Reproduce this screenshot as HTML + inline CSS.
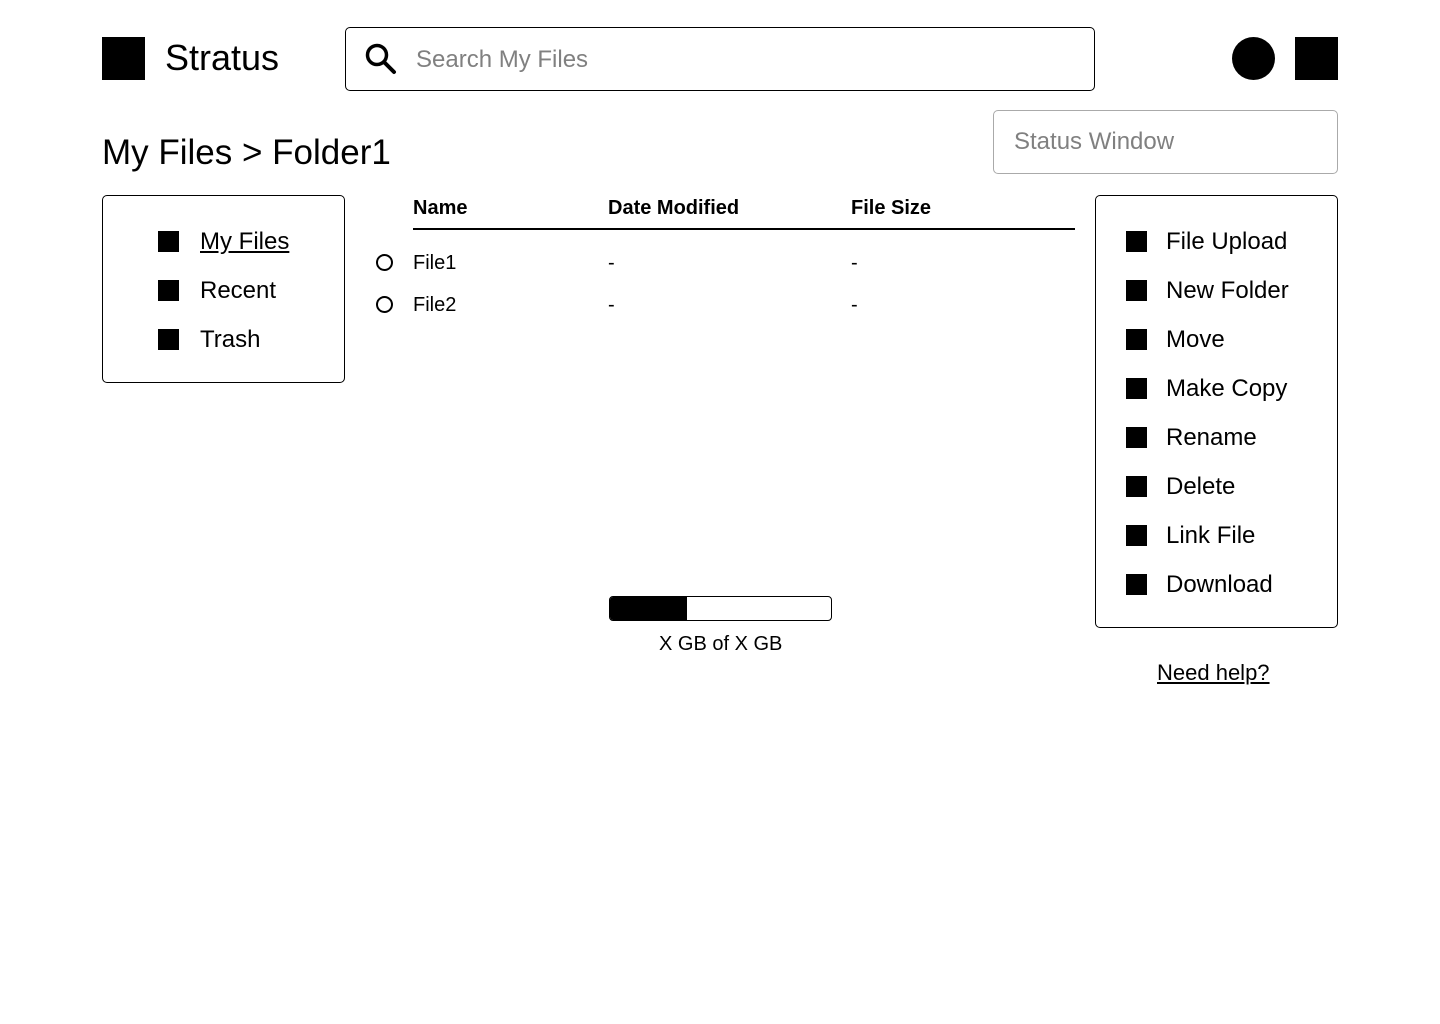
<!DOCTYPE html>
<html><head><meta charset="utf-8"><style>
*{margin:0;padding:0;box-sizing:border-box}
body{width:1440px;height:1024px;background:#fff;font-family:"Liberation Sans",sans-serif;color:#000;position:relative;overflow:hidden}
.a{position:absolute}
.sq{position:absolute;background:#000}
.box{position:absolute;border:1px solid #000;border-radius:5px}
.t{position:absolute;white-space:nowrap;line-height:1}
</style></head><body>
<div class="sq" style="left:102px;top:37px;width:43px;height:43px"></div>
<div class="t" style="left:165px;top:40px;font-size:36px">Stratus</div>
<div class="box" style="left:345px;top:27px;width:750px;height:64px"></div>
<svg class="a" style="left:364px;top:42px" width="34" height="34" viewBox="0 0 34 34"><circle cx="13" cy="13" r="9.5" fill="none" stroke="#000" stroke-width="3.5"/><line x1="20" y1="20" x2="30" y2="30" stroke="#000" stroke-width="4" stroke-linecap="round"/></svg>
<div class="t" style="left:416px;top:48px;font-size:24px;color:#808080">Search My Files</div>
<div class="a" style="left:1232px;top:37px;width:43px;height:43px;border-radius:50%;background:#000"></div>
<div class="sq" style="left:1295px;top:37px;width:43px;height:43px"></div>

<div class="t" style="left:102px;top:135px;font-size:35px">My Files &gt; Folder1</div>
<div class="box" style="left:993px;top:110px;width:345px;height:64px;border-color:#aaa"></div>
<div class="t" style="left:1014px;top:130px;font-size:24px;color:#808080">Status Window</div>

<div class="box" style="left:102px;top:195px;width:243px;height:188px"></div>
<div class="sq" style="left:158px;top:231px;width:21px;height:21px"></div>
<div class="t" style="left:200px;top:230px;font-size:24px;text-decoration:underline">My Files</div>
<div class="sq" style="left:158px;top:280px;width:21px;height:21px"></div>
<div class="t" style="left:200px;top:279px;font-size:24px">Recent</div>
<div class="sq" style="left:158px;top:329px;width:21px;height:21px"></div>
<div class="t" style="left:200px;top:328px;font-size:24px">Trash</div>

<div class="t" style="left:413px;top:198px;font-size:20px;font-weight:bold">Name</div>
<div class="t" style="left:608px;top:198px;font-size:20px;font-weight:bold">Date Modified</div>
<div class="t" style="left:851px;top:198px;font-size:20px;font-weight:bold">File Size</div>
<div class="a" style="left:413px;top:228px;width:662px;height:2px;background:#000"></div>
<div class="a" style="left:376px;top:254px;width:17px;height:17px;border:2px solid #000;border-radius:50%"></div>
<div class="t" style="left:413px;top:253px;font-size:20px">File1</div>
<div class="t" style="left:608px;top:253px;font-size:20px">-</div>
<div class="t" style="left:851px;top:253px;font-size:20px">-</div>
<div class="a" style="left:376px;top:296px;width:17px;height:17px;border:2px solid #000;border-radius:50%"></div>
<div class="t" style="left:413px;top:295px;font-size:20px">File2</div>
<div class="t" style="left:608px;top:295px;font-size:20px">-</div>
<div class="t" style="left:851px;top:295px;font-size:20px">-</div>

<div class="a" style="left:609px;top:596px;width:223px;height:25px;border:1px solid #000;border-radius:4px;overflow:hidden"><div style="width:77px;height:100%;background:#000"></div></div>
<div class="t" style="left:659px;top:634px;font-size:20px">X GB of X GB</div>

<div class="box" style="left:1095px;top:195px;width:243px;height:433px"></div>
<div class="sq" style="left:1126px;top:231px;width:21px;height:21px"></div><div class="t" style="left:1166px;top:230px;font-size:24px">File Upload</div>
<div class="sq" style="left:1126px;top:280px;width:21px;height:21px"></div><div class="t" style="left:1166px;top:279px;font-size:24px">New Folder</div>
<div class="sq" style="left:1126px;top:329px;width:21px;height:21px"></div><div class="t" style="left:1166px;top:328px;font-size:24px">Move</div>
<div class="sq" style="left:1126px;top:378px;width:21px;height:21px"></div><div class="t" style="left:1166px;top:377px;font-size:24px">Make Copy</div>
<div class="sq" style="left:1126px;top:427px;width:21px;height:21px"></div><div class="t" style="left:1166px;top:426px;font-size:24px">Rename</div>
<div class="sq" style="left:1126px;top:476px;width:21px;height:21px"></div><div class="t" style="left:1166px;top:475px;font-size:24px">Delete</div>
<div class="sq" style="left:1126px;top:525px;width:21px;height:21px"></div><div class="t" style="left:1166px;top:524px;font-size:24px">Link File</div>
<div class="sq" style="left:1126px;top:574px;width:21px;height:21px"></div><div class="t" style="left:1166px;top:573px;font-size:24px">Download</div>

<div class="t" style="left:1157px;top:662px;font-size:22px;text-decoration:underline">Need help?</div>
</body></html>
